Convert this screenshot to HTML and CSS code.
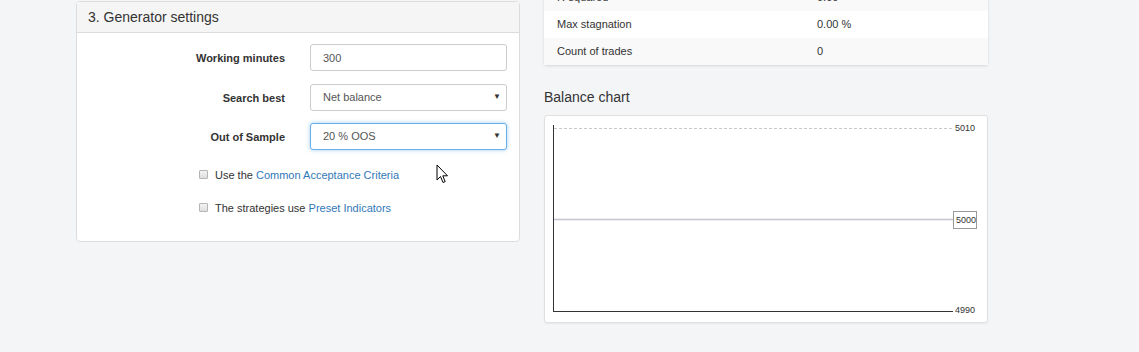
FILE: index.html
```html
<!DOCTYPE html>
<html lang="en">
<head>
    <meta charset="UTF-8">
    <title>Generator</title>
    <link rel="stylesheet" href="styles.css">
</head>
<body>
    <div class="page">
        <div class="col">
            <div class="panel">
                <div class="panel-heading">3. Generator settings</div>
                <div class="panel-body">
                    <div class="form-row">
                        <label>Working minutes</label>
                        <input class="control" type="text" value="300">
                    </div>
                    <div class="form-row">
                        <label>Search best</label>
                        <div class="select-wrap">
                            <div class="control">Net balance</div>
                            <span class="caret">&#9660;</span>
                        </div>
                    </div>
                    <div class="form-row">
                        <label>Out of Sample</label>
                        <div class="select-wrap">
                            <div class="control focused">20 % OOS</div>
                            <span class="caret">&#9660;</span>
                        </div>
                    </div>

                    <div class="checks">
                        <div class="check-row">
                            <input type="checkbox">
                            <span>Use the <a href="#">Common Acceptance Criteria</a></span>
                        </div>
                        <div class="check-row">
                            <input type="checkbox">
                            <span>The strategies use <a href="#">Preset Indicators</a></span>
                        </div>
                    </div>
                </div>
            </div>
        </div>

        <div class="col">
            <div class="stats-card">
                <div class="stat-row"><span class="stat-name">R-squared</span><span>0.00</span></div>
                <div class="stat-row"><span class="stat-name">Max stagnation</span><span>0.00 %</span></div>
                <div class="stat-row"><span class="stat-name">Count of trades</span><span>0</span></div>
            </div>

            <h4 class="chart-title">Balance chart</h4>
            <div class="chart-card">
                <svg width="442" height="206" viewBox="0 0 442 206">
                    <line x1="8.5" y1="9" x2="8.5" y2="196" stroke="#333" stroke-width="1"/>
                    <line x1="9" y1="12.5" x2="408" y2="12.5" stroke="#c8c8c8" stroke-dasharray="3,2"/>
                    <text x="410" y="15" class="axis-label">5010</text>
                    <line x1="9" y1="103.5" x2="408" y2="103.5" stroke="#c4c4cc" stroke-width="1.5"/>
                    <rect x="408.5" y="95.5" width="23" height="17" fill="#fff" stroke="#999"/>
                    <text x="411" y="107" class="axis-label">5000</text>
                    <line x1="8" y1="195.5" x2="408" y2="195.5" stroke="#333" stroke-width="1"/>
                    <text x="410" y="197" class="axis-label">4990</text>
                </svg>
            </div>
        </div>
    </div>

    <svg class="cursor" width="14" height="22" viewBox="0 0 14 22">
        <path d="M1 1 L1 16 L4.5 12.5 L7 18.5 L9.2 17.6 L6.8 11.8 L11.5 11.8 Z" fill="#fff" stroke="#000" stroke-width="1" stroke-linejoin="round"/>
    </svg>
</body>
</html>
```

FILE: styles.css
```css
body {
    margin: 0;
    background: #f4f5f7;
    font-family: "Liberation Sans", Arial, sans-serif;
    color: #333;
    height: 352px;
    overflow: hidden;
}
.page {
    display: flex;
    align-items: flex-start;
    gap: 24px;
    padding-left: 76px;
}
.col {
    width: 444px;
}
.panel {
    margin-top: 1px;
    background: #fff;
    border: 1px solid #dcdcdc;
    border-radius: 4px;
}
.panel-heading {
    height: 30px;
    line-height: 30px;
    padding: 0 11px;
    background: #f5f5f5;
    border-bottom: 1px solid #dcdcdc;
    font-size: 14px;
    color: #333;
}
.panel-body {
    padding: 11px 0 25px;
}
.form-row {
    display: grid;
    grid-template-columns: 208px 197px;
    column-gap: 25px;
    align-items: center;
    margin-bottom: 13px;
}
.form-row:nth-child(2) {
    margin-bottom: 12px;
}
.form-row label {
    text-align: right;
    font-size: 11px;
    font-weight: bold;
    color: #333;
}
.control {
    box-sizing: border-box;
    width: 197px;
    height: 27px;
    line-height: 25px;
    padding: 0 12px;
    border: 1px solid #ccc;
    border-radius: 3px;
    background: #fff;
    font-family: "Liberation Sans", Arial, sans-serif;
    font-size: 11px;
    color: #555;
    margin: 0;
    outline: none;
}
.control.focused {
    border-color: #66afe9;
    box-shadow: 0 0 4px rgba(102, 175, 233, 0.6);
}
.select-wrap {
    position: relative;
}
.caret {
    position: absolute;
    right: 6px;
    top: 8px;
    font-size: 8px;
    color: #333;
}
.checks {
    padding-top: 3px;
    padding-left: 122px;
    display: flex;
    flex-direction: column;
    gap: 16px;
}
.check-row {
    display: flex;
    align-items: center;
    height: 17px;
    font-size: 11px;
    color: #333;
}
.check-row input {
    appearance: none;
    width: 9px;
    height: 9px;
    margin: 0 7px 0 0;
    border: 1px solid #b5b5b5;
    border-radius: 1px;
    background: linear-gradient(#f3f3f3, #dedede);
}
.check-row a {
    color: #3278b8;
    text-decoration: none;
}
.stats-card {
    margin-top: -16px;
    background: #fff;
    border-radius: 0 0 3px 3px;
    box-shadow: 0 1px 3px rgba(0, 0, 0, 0.13);
}
.stat-row {
    display: flex;
    height: 27px;
    line-height: 27px;
    padding-left: 13px;
    font-size: 11px;
    color: #333;
}
.stat-row:nth-child(odd) {
    background: #f9f9f9;
}
.stat-name {
    width: 260px;
}
.chart-title {
    margin: 22px 0 8px;
    font-size: 14px;
    line-height: 20px;
    font-weight: normal;
    color: #333;
}
.chart-card {
    height: 206px;
    background: #fff;
    border: 1px solid #e0e0e0;
    border-radius: 3px;
    box-shadow: 0 1px 2px rgba(0, 0, 0, 0.06);
}
.chart-card svg {
    display: block;
}
.axis-label {
    font-family: "Liberation Sans", Arial, sans-serif;
    font-size: 9px;
    fill: #333;
}
.cursor {
    position: absolute;
    left: 436px;
    top: 164px;
}
```
